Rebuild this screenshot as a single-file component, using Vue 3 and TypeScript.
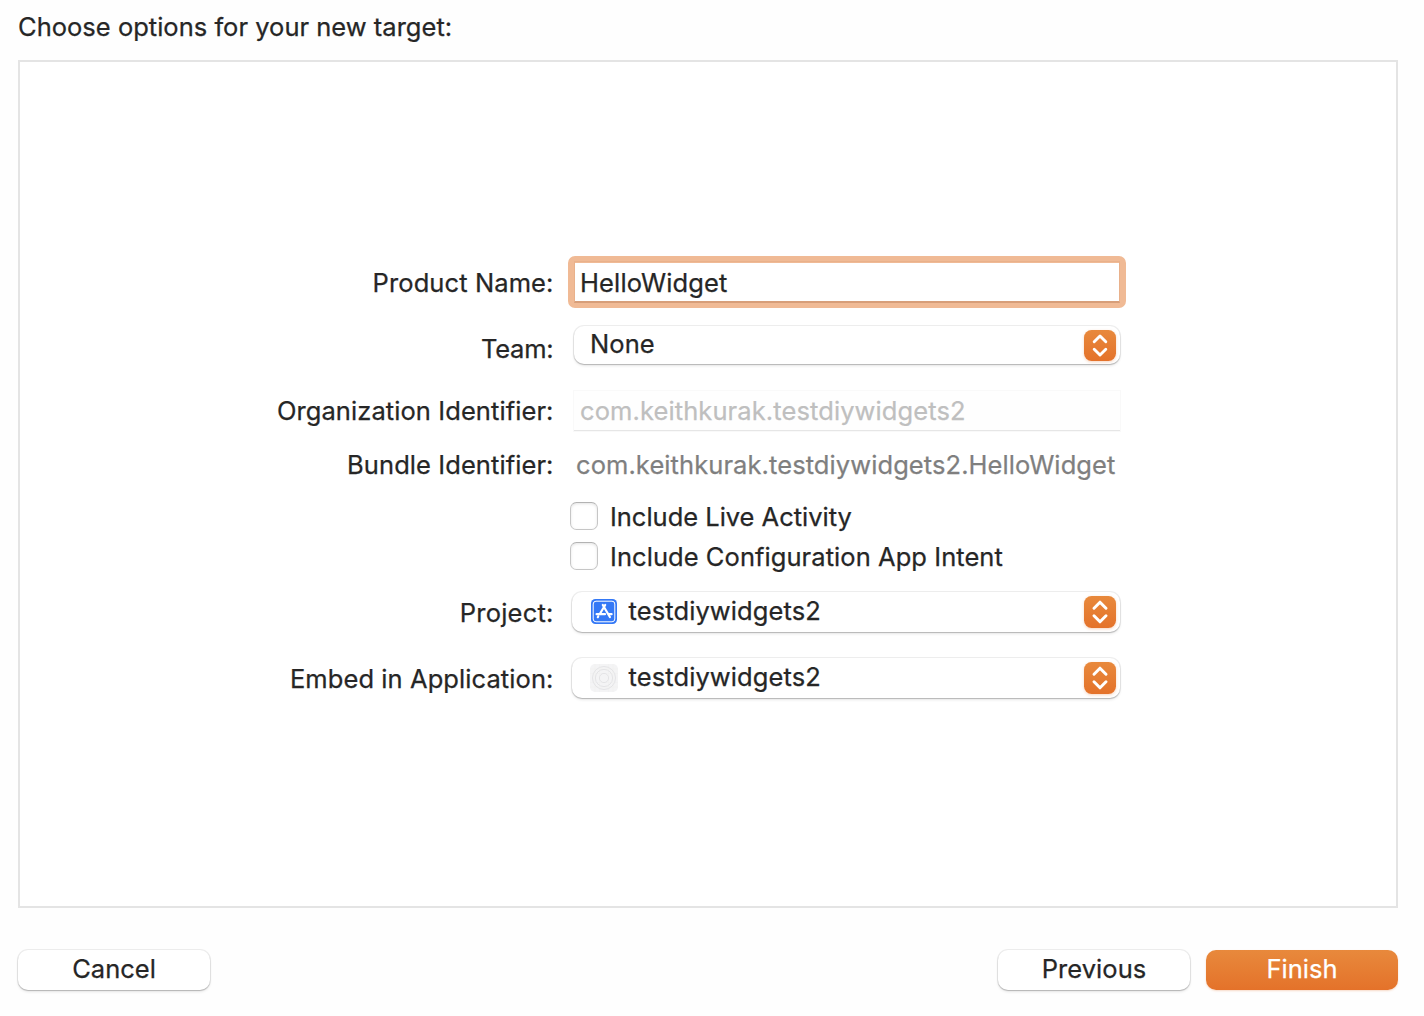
<script setup lang="ts">
import { ref } from 'vue'

const productName = ref('HelloWidget')
const organization = 'com.keithkurak.testdiywidgets2'
const options = [
  { key: 'live', label: 'Include Live Activity' },
  { key: 'intent', label: 'Include Configuration App Intent' },
]
</script>

<template>
  <main class="sheet">
    <h1 class="title">Choose options for your new target:</h1>

    <section class="panel">
      <div class="row product">
        <span class="label">Product Name:</span>
        <div class="field focused">{{ productName }}</div>
      </div>

      <div class="row team">
        <span class="label">Team:</span>
        <div class="popup">
          <span class="value">None</span>
          <span class="stepper">
            <svg viewBox="0 0 32 32"><path d="M10 12.2 16 6.2l6 6M10 19.8 16 25.8l6-6" /></svg>
          </span>
        </div>
      </div>

      <div class="row organization">
        <span class="label">Organization Identifier:</span>
        <div class="field disabled">{{ organization }}</div>
      </div>

      <div class="row bundle">
        <span class="label">Bundle Identifier:</span>
        <span class="static">{{ organization }}.{{ productName }}</span>
      </div>

      <div v-for="option in options" :key="option.key" class="row check" :class="option.key">
        <span class="box"></span>
        <span class="check-text">{{ option.label }}</span>
      </div>

      <div class="row project">
        <span class="label">Project:</span>
        <div class="popup tall">
          <svg class="icon" viewBox="0 0 28 28">
            <rect x="1" y="1" width="26" height="25" rx="4.5" fill="#3478f6" />
            <rect x="3.2" y="3.2" width="21.6" height="20.6" rx="2.8" fill="none" stroke="#fff" stroke-width="1" />
            <g fill="none" stroke="#fff" stroke-width="2.2" stroke-linecap="round">
              <path d="M15.2 7 9.8 16M12.8 7 19.9 19" />
              <path d="M6.6 16.2h8.4M18.8 16.2h2.8M8.2 18.5l-.4.7" />
            </g>
          </svg>
          <span class="value">testdiywidgets2</span>
          <span class="stepper">
            <svg viewBox="0 0 32 32"><path d="M10 12.2 16 6.2l6 6M10 19.8 16 25.8l6-6" /></svg>
          </span>
        </div>
      </div>

      <div class="row embed">
        <span class="label">Embed in Application:</span>
        <div class="popup tall">
          <svg class="icon" viewBox="0 0 28 28">
            <rect x="0" y="0" width="28" height="28" rx="5" fill="#f4f4f5" />
            <path d="M5 0v28M9.5 0v28M18.5 0v28M23 0v28M0 5h28M0 9.5h28M0 18.5h28M0 23h28" stroke="#f0f0f1" stroke-width=".7" />
            <g fill="none" stroke="#e2e2e4" stroke-width=".9">
              <circle cx="14" cy="14" r="11.5" />
              <circle cx="14" cy="14" r="8.6" />
              <circle cx="14" cy="14" r="4.6" />
            </g>
          </svg>
          <span class="value">testdiywidgets2</span>
          <span class="stepper">
            <svg viewBox="0 0 32 32"><path d="M10 12.2 16 6.2l6 6M10 19.8 16 25.8l6-6" /></svg>
          </span>
        </div>
      </div>
    </section>

    <footer class="actions">
      <button class="button">Cancel</button>
      <span class="spacer"></span>
      <button class="button previous">Previous</button>
      <button class="button primary">Finish</button>
    </footer>
  </main>
</template>

<style>
body {
  background: #fefefe;
}
</style>

<style scoped>
.sheet {
  box-sizing: border-box;
  width: 1424px;
  height: 1016px;
  padding: 7px 26px 26px 18px;
  display: flex;
  flex-direction: column;
  overflow: hidden;
  font: 25.5px/40px Inter, "Liberation Sans", sans-serif;
  letter-spacing: 0.08px;
  color: #262626;
  -webkit-text-stroke: 0.25px;
  white-space: nowrap;
}

.title {
  margin: 0 0 13px;
  font: inherit;
  letter-spacing: 0.015px;
}

.panel {
  box-sizing: border-box;
  height: 848px;
  flex: none;
  padding-top: 200px;
  border: 2px solid #e4e4e4;
  background: #fff;
}

.row {
  display: flex;
  align-items: flex-start;
  height: 40px;
}

.label {
  width: 533.5px;
  flex: none;
  margin-right: 20.5px;
  text-align: right;
}

.product .label {
  padding-top: 1px;
  letter-spacing: 0.1px;
}

.team {
  margin-top: 23px;
}

.team .label {
  padding-top: 4px;
  letter-spacing: -0.2px;
}

.organization {
  margin-top: 25px;
}

.organization .label {
  padding-top: 1px;
}

.bundle {
  margin-top: 15px;
}

.static {
  margin-left: 2px;
  color: #7f7f7f;
  letter-spacing: 0.083px;
}

.field {
  box-sizing: border-box;
  width: 546px;
  height: 40px;
  padding-left: 6px;
}

.focused {
  position: relative;
  line-height: 42px;
  background: #fff;
  letter-spacing: 0.15px;
}

.focused::before {
  content: "";
  position: absolute;
  inset: -6px;
  border: 7px solid #f0ba95;
  border-radius: 7px;
}

.focused::after {
  content: "";
  position: absolute;
  inset: -1px 0;
  border: 1px solid #e9b18b;
  border-bottom: 2px solid #d79e79;
}

.disabled {
  width: 548px;
  height: 42px;
  margin-left: -1px;
  padding-top: 1px;
  padding-left: 7px;
  color: #bfbfbf;
  background: #fefefe;
  letter-spacing: 0.1px;
  box-shadow: inset 0 0 0 1px #f9f9f9, inset 0 -2px #e6e6e6;
}

.popup {
  box-sizing: border-box;
  display: flex;
  width: 546px;
  height: 38px;
  margin-top: 1px;
  padding: 0 4px 0 16px;
  border-radius: 10px;
  background: #fff;
  box-shadow: 0 0 0 1px rgba(0, 0, 0, 0.07), 0 1px 1px rgba(0, 0, 0, 0.16), 0 2px 3px rgba(0, 0, 0, 0.09);
}

.popup .value {
  flex: 1;
  margin-top: -2px;
}

.popup.tall {
  width: 548px;
  height: 40px;
  margin-top: 0;
  margin-left: -2px;
  padding-left: 18px;
}

.tall .value {
  margin-top: -1px;
  letter-spacing: 0.1px;
}

.icon {
  width: 28px;
  height: 28px;
  margin: 6px 10.5px 0 0;
}

.stepper {
  width: 32px;
  height: 31px;
  margin-top: 3.5px;
  border-radius: 7.5px;
  background: linear-gradient(#e8893c, #e4722a);
  box-shadow: 0 1px 3px rgba(228, 114, 42, 0.3);
}

.tall .stepper {
  height: 32px;
  margin-top: 4px;
}

.stepper svg {
  display: block;
  width: 32px;
  height: 100%;
  fill: none;
  stroke: #fff;
  stroke-width: 3;
  stroke-linecap: round;
  stroke-linejoin: round;
}

.check {
  padding-left: 550px;
}

.live {
  margin-top: 12px;
  letter-spacing: -0.02px;
}

.box {
  box-sizing: border-box;
  width: 28px;
  height: 28px;
  margin: 5px 12px 0 0;
  border: 1px solid #c6c6c6;
  border-top-color: #b3b3b3;
  border-radius: 6.5px;
  background: #fff;
  box-shadow: inset 0 1px 3px rgba(0, 0, 0, 0.11);
}

.intent {
  letter-spacing: 0.06px;
}

.project {
  margin-top: 15px;
}

.project .label {
  padding-top: 1px;
  letter-spacing: 0.2px;
}

.embed {
  margin-top: 26px;
}

.embed .label {
  padding-top: 1px;
  letter-spacing: 0.08px;
}

.actions {
  display: flex;
  margin-top: 42px;
}

.spacer {
  flex: 1;
}

.button {
  width: 192px;
  height: 40px;
  padding: 0 0 2px;
  border: 0;
  border-radius: 10px;
  background: #fff;
  color: inherit;
  font: inherit;
  line-height: 38px;
  letter-spacing: 0;
  box-shadow: 0 0 0 1px rgba(0, 0, 0, 0.07), 0 1px 1px rgba(0, 0, 0, 0.16), 0 2px 3px rgba(0, 0, 0, 0.09);
}

.previous {
  margin-right: 16px;
  letter-spacing: 0.06px;
}

.primary {
  background: linear-gradient(#e8893c, #e4722a);
  color: #fff;
  box-shadow: 0 1px 2px rgba(228, 114, 42, 0.25);
}
</style>
